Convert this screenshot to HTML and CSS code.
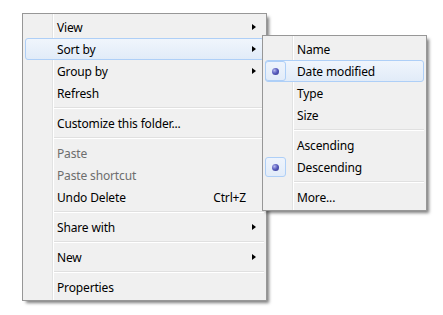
FILE: index.html
```html
<!DOCTYPE html>
<html>
<head>
<meta charset="utf-8">
<link rel="stylesheet" href="styles.css">
</head>
<body>
<div class="desk">
  <div class="menu main">
    <div class="item"><span class="label">View</span><span class="arrow"></span></div>
    <div class="item hot"><span class="label">Sort by</span><span class="arrow"></span></div>
    <div class="item"><span class="label">Group by</span><span class="arrow"></span></div>
    <div class="item"><span class="label">Refresh</span></div>
    <div class="sep"></div>
    <div class="item"><span class="label">Customize this folder...</span></div>
    <div class="sep"></div>
    <div class="item disabled"><span class="label">Paste</span></div>
    <div class="item disabled"><span class="label">Paste shortcut</span></div>
    <div class="item"><span class="label">Undo Delete</span><span class="accel">Ctrl+Z</span></div>
    <div class="sep"></div>
    <div class="item"><span class="label">Share with</span><span class="arrow"></span></div>
    <div class="sep"></div>
    <div class="item"><span class="label">New</span><span class="arrow"></span></div>
    <div class="sep"></div>
    <div class="item"><span class="label">Properties</span></div>
  </div>
  <div class="menu sub">
    <div class="item"><span class="label">Name</span></div>
    <div class="item hot checked"><span class="check"><span class="dot"></span></span><span class="label">Date modified</span></div>
    <div class="item"><span class="label">Type</span></div>
    <div class="item"><span class="label">Size</span></div>
    <div class="sep"></div>
    <div class="item"><span class="label">Ascending</span></div>
    <div class="item checked"><span class="check"><span class="dot"></span></span><span class="label">Descending</span></div>
    <div class="sep"></div>
    <div class="item"><span class="label">More...</span></div>
  </div>
</div>
</body>
</html>
```

FILE: styles.css
```css
html, body {
  margin: 0;
  padding: 0;
  background: #ffffff;
}

.desk {
  position: relative;
  width: 443px;
  height: 315px;
  overflow: hidden;
  font-family: "Segoe UI", "Noto Sans", "Open Sans", sans-serif;
  font-size: 12px;
  letter-spacing: -0.15px;
  color: #000;
}

.menu {
  position: absolute;
  box-sizing: border-box;
  border: 1px solid #979797;
  padding: 2px;
  display: flex;
  flex-direction: column;
  background-color: #f0f0f0;
  background-image: linear-gradient(to right,
    #f0f0f0 0, #f0f0f0 29px,
    #e2e3e3 29px, #e2e3e3 30px,
    #ffffff 30px, #ffffff 31px,
    #f0f0f0 31px);
  background-origin: padding-box;
  box-shadow: 3px 3px 3px -1px rgba(0, 0, 0, 0.5);
}

.main {
  left: 22px;
  top: 13px;
  width: 245px;
}

.sub {
  left: 262px;
  top: 35px;
  width: 165px;
}

.item {
  position: relative;
  box-sizing: border-box;
  height: 22px;
  display: flex;
  align-items: center;
  padding: 0 17px 0 31px;
  border: 1px solid transparent;
  border-radius: 3px;
  white-space: nowrap;
}

.label {
  flex: 1;
  line-height: 21px;
  padding-top: 1px;
}

.accel {
  line-height: 21px;
  padding-top: 1px;
}

.item.hot {
  border-color: #aecff7;
  background: linear-gradient(#f0f5fc, #e1ebf8);
}

.item.disabled {
  color: #6d6d6d;
}

.arrow {
  position: absolute;
  right: 7px;
  top: 7px;
  width: 0;
  height: 0;
  border-left: 4px solid #000;
  border-top: 3.5px solid transparent;
  border-bottom: 3.5px solid transparent;
}

.check {
  position: absolute;
  left: -1px;
  top: 0;
  box-sizing: border-box;
  width: 21px;
  height: 20px;
  border: 1px solid #aecff7;
  border-radius: 3px;
  background: linear-gradient(#eef4fc, #e2ecf9);
  display: flex;
  align-items: center;
  justify-content: center;
}

.dot {
  width: 7px;
  height: 7px;
  border-radius: 50%;
  background: radial-gradient(circle at 35% 35%, #b4b8ee 0, #5a5fc0 45%, #2b2f86 100%);
}

.sep {
  box-sizing: border-box;
  height: 8px;
  margin-left: 29px;
  padding-top: 3px;
}

.sep::before {
  content: "";
  display: block;
  height: 1px;
  background: #e0e0e0;
  border-bottom: 1px solid #ffffff;
}
```
